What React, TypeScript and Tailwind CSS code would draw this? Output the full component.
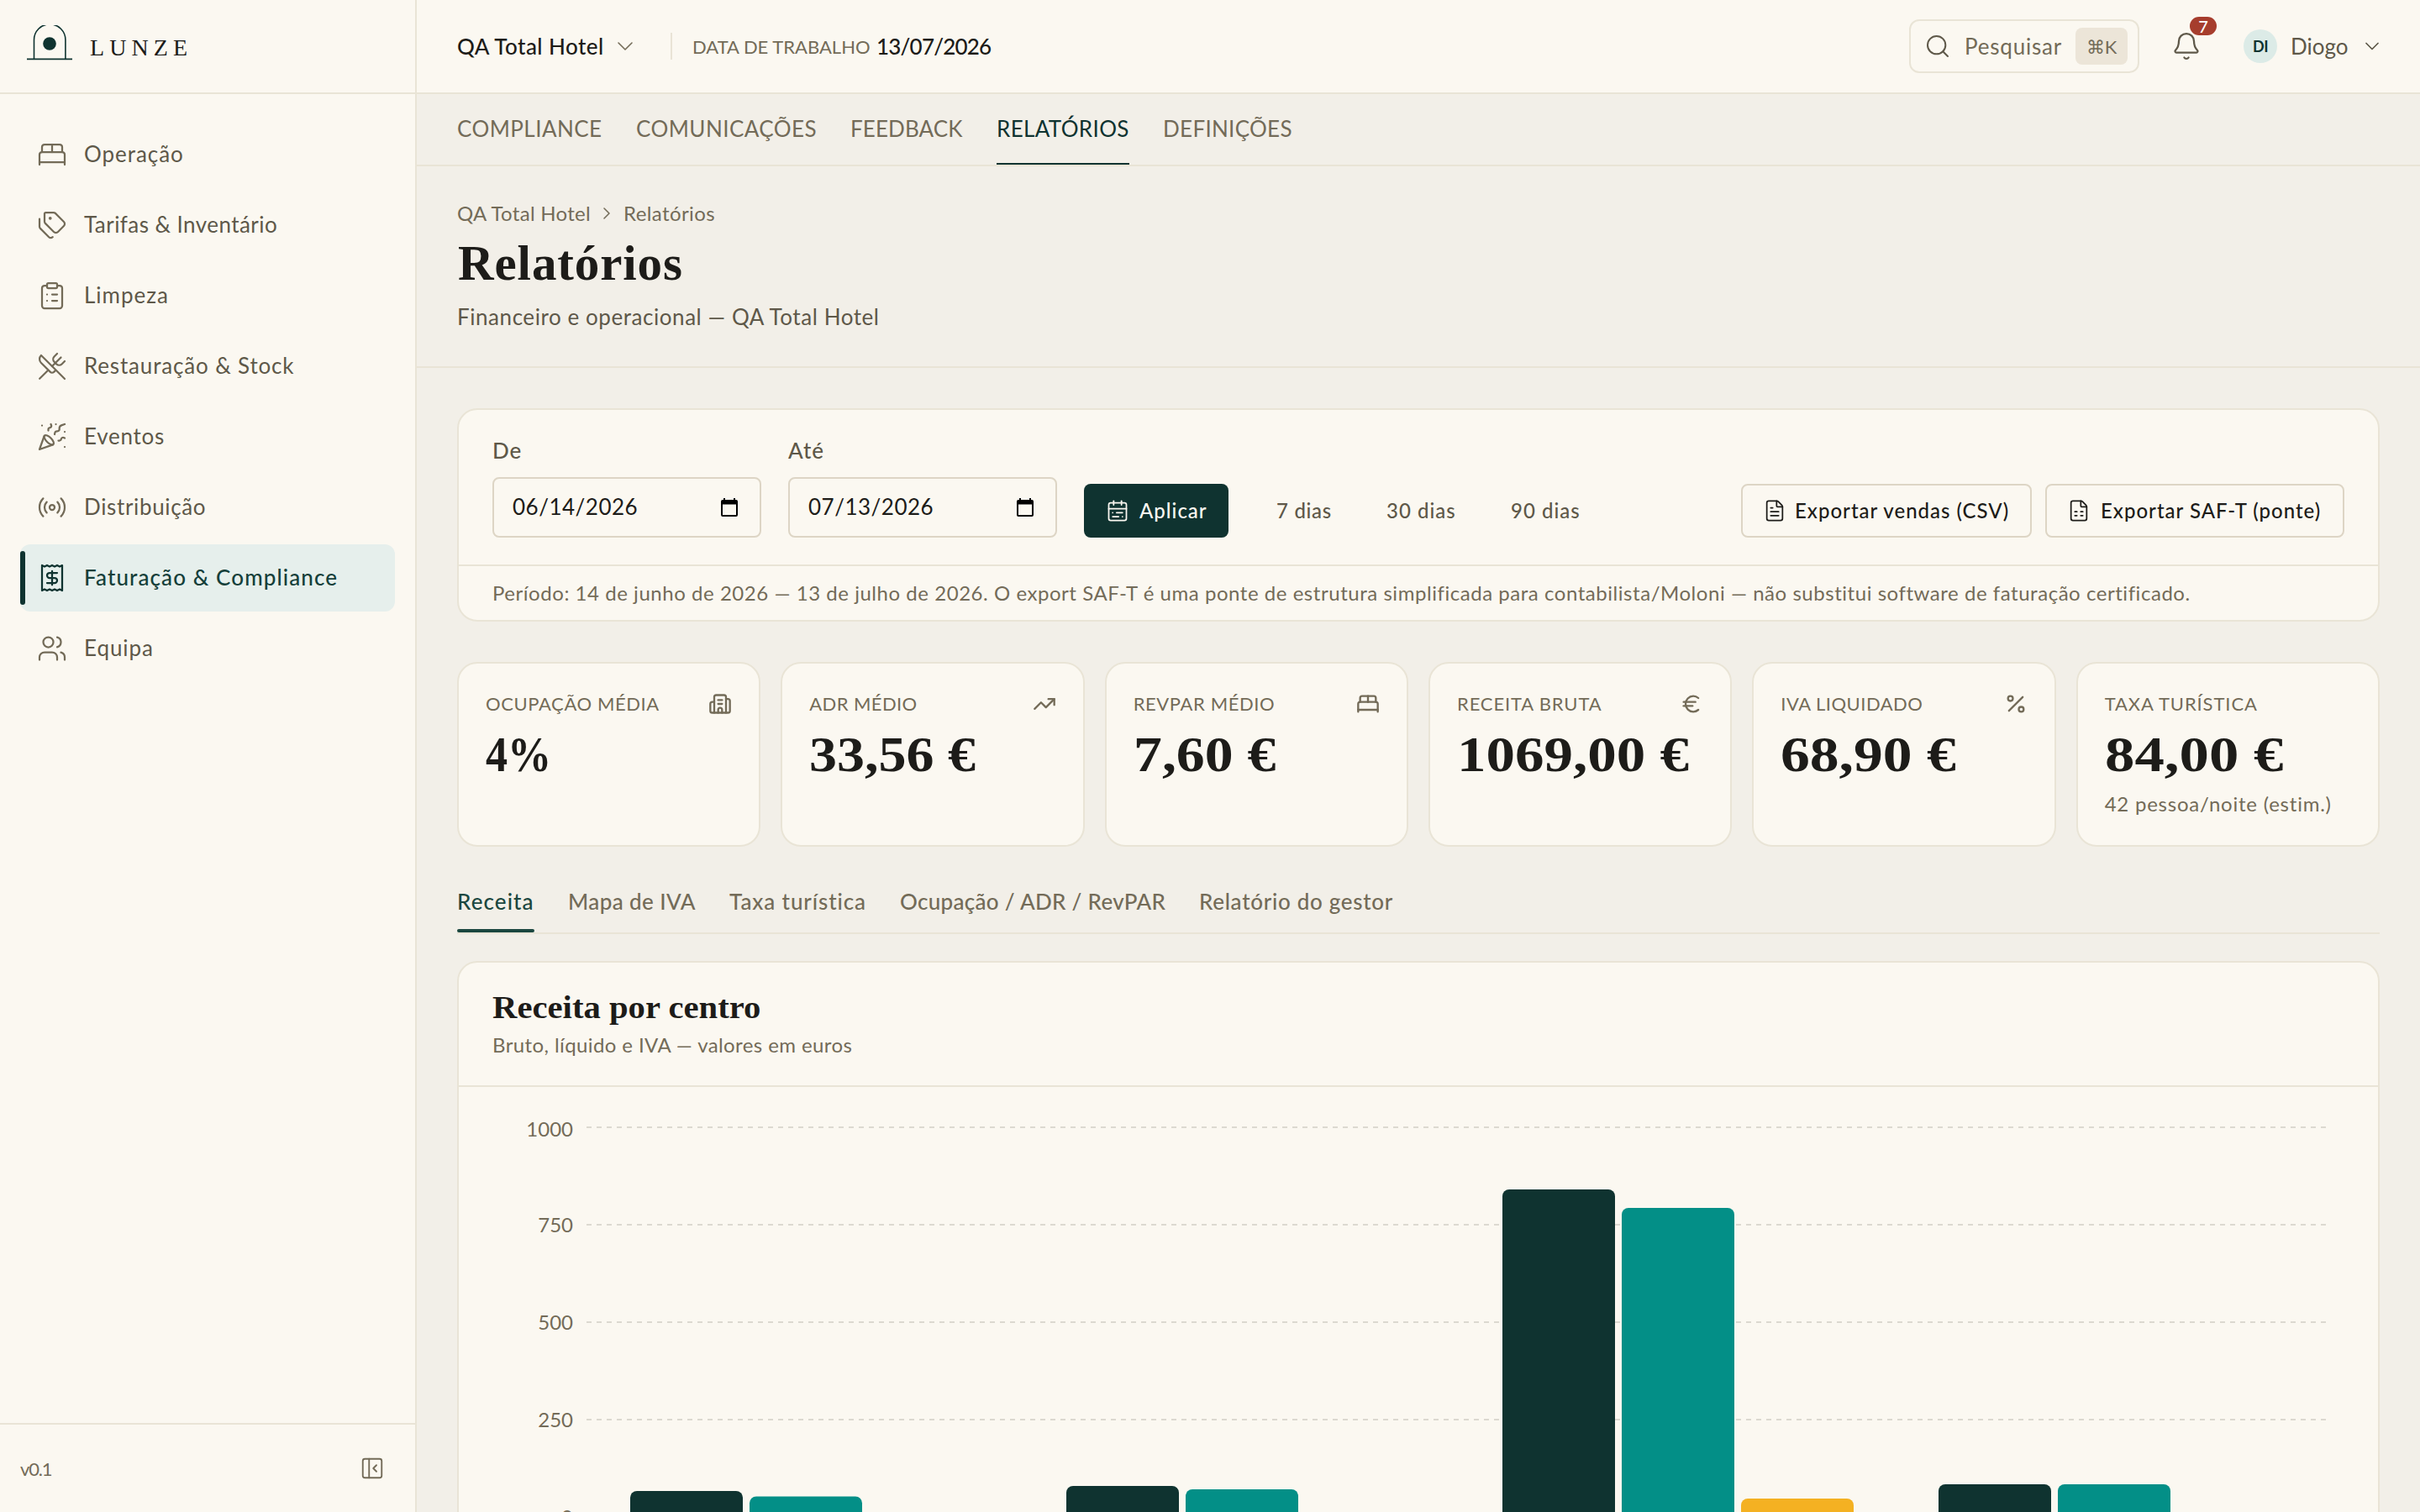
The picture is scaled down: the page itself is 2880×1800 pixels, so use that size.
import React from 'react';
import {
  BedDouble, Bell, Building2, CalendarRange, ChevronDown, ChevronRight, ClipboardList, Euro, FileSpreadsheet,
  FileText, PanelLeftClose, PartyPopper, Percent, Radio, Search, Tags, TrendingUp, Users, UtensilsCrossed,
} from 'lucide-react';
import type {LucideIcon} from 'lucide-react';

interface NavItem {
  label: string;
  icon: LucideIcon | React.FC<{className?: string; strokeWidth?: number}>;
  tracking: string;
  active?: boolean;
}

const ReceiptDollar: React.FC<{className?: string; strokeWidth?: number}> = ({className, strokeWidth}) => (
  <svg viewBox="0 0 24 24" fill="none" stroke="currentColor" strokeWidth={strokeWidth} strokeLinecap="round"
       strokeLinejoin="round" className={className}>
    <path d="M4 2v20l2-1 2 1 2-1 2 1 2-1 2 1 2-1 2 1V2l-2 1-2-1-2 1-2-1-2 1-2-1-2 1Z"/>
    <path d="M16 8h-6a2 2 0 1 0 0 4h4a2 2 0 1 1 0 4H8"/>
    <path d="M12 17.5v-11"/>
  </svg>
);

const navItems: NavItem[] = [
  {label: 'Operação', icon: BedDouble, tracking: 'tracking-[0.95px]'},
  {label: 'Tarifas & Inventário', icon: Tags, tracking: 'tracking-[0.45px]'},
  {label: 'Limpeza', icon: ClipboardList, tracking: 'tracking-[1px]'},
  {label: 'Restauração & Stock', icon: UtensilsCrossed, tracking: 'tracking-[0.84px]'},
  {label: 'Eventos', icon: PartyPopper, tracking: 'tracking-[0.75px]'},
  {label: 'Distribuição', icon: Radio, tracking: 'tracking-[0.65px]'},
  {label: 'Faturação & Compliance', icon: ReceiptDollar, tracking: 'tracking-[1.1px]', active: true},
  {label: 'Equipa', icon: Users, tracking: 'tracking-[0.95px]'},
];

const sectionTabs = [
  {label: 'COMPLIANCE', style: 'w-[173px] tracking-[0.45px]'},
  {label: 'COMUNICAÇÕES', style: 'w-[215px] tracking-[0.45px]'},
  {label: 'FEEDBACK', style: 'w-[134px] tracking-[0.1px]'},
  {label: 'RELATÓRIOS', style: 'w-[158px] tracking-[0.35px]', active: true},
  {label: 'DEFINIÇÕES', style: 'w-[154px] tracking-[0.3px]'},
];

const reportTabs = [
  {label: 'Receita', style: 'w-[92px] tracking-[1.1px]', active: true},
  {label: 'Mapa de IVA', style: 'w-[152px] tracking-[0.4px]'},
  {label: 'Taxa turística', style: 'w-[163px] tracking-[0.9px]'},
  {label: 'Ocupação / ADR / RevPAR', style: 'w-[316px] tracking-[0.3px]'},
  {label: 'Relatório do gestor', style: 'w-[231px] tracking-[0.7px]'},
];

const kpis = [
  {label: 'OCUPAÇÃO MÉDIA', value: '4%', icon: Building2, tracking: 'tracking-[0.6px]', stretch: 'scale-x-[0.87]'},
  {label: 'ADR MÉDIO', value: '33,56 €', icon: TrendingUp, tracking: 'tracking-[0.4px]', stretch: 'scale-x-[1.1]'},
  {label: 'REVPAR MÉDIO', value: '7,60 €', icon: BedDouble, tracking: 'tracking-[0.6px]', stretch: 'scale-x-[1.13]'},
  {label: 'RECEITA BRUTA', value: '1069,00 €', icon: Euro, tracking: 'tracking-[0.85px]', stretch: 'scale-x-[1.15]'},
  {label: 'IVA LIQUIDADO', value: '68,90 €', icon: Percent, tracking: 'tracking-[0.5px]', stretch: 'scale-x-[1.16]'},
  {label: 'TAXA TURÍSTICA', value: '84,00 €', hint: '42 pessoa/noite (estim.)', tracking: 'tracking-[0.9px]', stretch: 'scale-x-[1.18]'},
];

const bars = [
  {x: 750, top: 1775, fill: '#0f3330'},
  {x: 892, top: 1781.5, fill: '#038f87'},
  {x: 1269, top: 1769, fill: '#0f3330'},
  {x: 1411, top: 1773, fill: '#038f87'},
  {x: 1788, top: 1416, fill: '#0f3330'},
  {x: 1930, top: 1438, fill: '#038f87'},
  {x: 2072, top: 1784, fill: '#f4b122'},
  {x: 2307, top: 1767, fill: '#0f3330'},
  {x: 2449, top: 1767, fill: '#038f87'},
];

const Logo: React.FC = () => (
  <svg viewBox="0 0 54 42" className="h-[42px] w-[54px] shrink-0 overflow-hidden" fill="none" stroke="#0f3330" strokeWidth="1.6">
    <path d="M8.5 40V17.500a18.700 18.700 0 0 1 37.400 0V40"/>
    <path d="M0 40.400h54"/>
    <circle cx="27" cy="22" r="7.800" fill="#0f3330" stroke="none"/>
  </svg>
);

const Sidebar: React.FC = () => (
  <aside className="flex w-[496px] shrink-0 flex-col border-r-2 border-[#e9e4d6] bg-[#fbf8f1]">
    <div className="flex h-[112px] shrink-0 items-start gap-[21px] border-b-2 border-[#e9e4d6] pt-[30px] pl-8">
      <Logo/>
      <span className="mt-[11px] font-['Liberation_Serif'] text-[28px] leading-8 tracking-[6.1px] text-[#1d1c19]">LUNZE</span>
    </div>
    <nav className="flex grow flex-col gap-1 px-6 pt-8">
      {navItems.map(({label, icon: Icon, tracking, active}) => (
        <a
          key={label}
          className={`relative flex h-20 items-center gap-5 rounded-xl px-5 text-[26px] ${tracking} ${
            active ? 'bg-[#e6efec] font-medium text-[#153f3a]' : 'text-[#5e5849]'
          }`}
        >
          {active && <span className="absolute top-2 left-0 h-16 w-1.5 rounded-full bg-[#0f3330]"/>}
          <Icon className={`size-9 shrink-0 ${active ? 'text-[#0f3330]' : 'text-[#736b58]'}`} strokeWidth={1.5}/>
          <span className="pb-0.5">{label}</span>
        </a>
      ))}
    </nav>
    <div className="flex h-[106px] shrink-0 items-center justify-between border-t-2 border-[#e9e4d6] pr-9 pl-6 text-[#736b58]">
      <span className="text-[22px] tracking-[-1.2px]">v0.1</span>
      <PanelLeftClose className="size-[30px]" strokeWidth={1.5}/>
    </div>
  </aside>
);

const TopBar: React.FC = () => (
  <header className="flex h-[112px] shrink-0 items-center border-b-2 border-[#e9e4d6] bg-[#fbf8f1] pl-12 text-[26px] text-[#5e5849]">
    <span className="w-[184px] font-medium tracking-[0.45px] whitespace-nowrap text-[#1d1c19]">QA Total Hotel</span>
    <ChevronDown className="size-8 text-[#736b58]" strokeWidth={1.2}/>
    <span className="ml-[38px] h-8 w-0.5 bg-[#e9e4d6]"/>
    <span className="ml-6 w-[219px] text-[22px] whitespace-nowrap text-[#736b58]">DATA DE TRABALHO</span>
    <span className="font-medium tracking-[-0.8px] text-[#1d1c19]">13/07/2026</span>

    <div className="ml-auto flex h-16 w-[274px] items-center rounded-xl border-2 border-[#e9e4d6] pr-3 pl-4">
      <Search className="size-8" strokeWidth={1.5}/>
      <span className="ml-4 tracking-[0.8px] text-[#736b58]">Pesquisar</span>
      <span className="ml-auto flex h-11 w-[62px] items-center justify-center rounded-lg bg-[#ece5d8] text-[22px] text-[#736b58]">⌘K</span>
    </div>
    <div className="relative ml-[38px]">
      <Bell className="size-9" strokeWidth={1.5}/>
      <span className="absolute -top-[17px] left-[22px] flex h-[22px] w-8 items-center justify-center rounded-full bg-[#a63d2d] text-[20px] font-medium text-white">7</span>
    </div>
    <span className="ml-[50px] flex size-10 items-center justify-center rounded-full bg-[#dcebe7] text-[18px] font-bold tracking-[-0.5px] text-[#0f3330]">DI</span>
    <span className="ml-4 w-[67px]">Diogo</span>
    <ChevronDown className="mr-[43px] ml-4 size-7" strokeWidth={1.5}/>
  </header>
);

const DateField: React.FC<{label: string; value: string}> = ({label, value}) => (
  <div className="flex w-80 flex-col">
    <span className="text-[26px] leading-9 font-medium text-[#5e5849]">{label}</span>
    <div className="mt-3.5 flex h-[72px] items-center justify-between rounded-lg border-2 border-[#ddd5c5] pr-6 pl-[22px] text-[26px] text-[#1d1c19]">
      <span className="pb-0.5 font-normal tracking-[0.5px]">{value}</span>
      <svg viewBox="0 0 24 24" className="size-6 text-black" fill="currentColor">
        <path d="M5 1h2v2h10V1h2v2h1a2 2 0 0 1 2 2v16a2 2 0 0 1-2 2H4a2 2 0 0 1-2-2V5a2 2 0 0 1 2-2h1zM4 8.500v12.500h16V8.500z"/>
      </svg>
    </div>
  </div>
);

const FilterCard: React.FC = () => (
  <section className="flex h-[254px] flex-col rounded-3xl border-2 border-[#e9e4d6] bg-[#fbf8f1]">
    <div className="flex h-[184px] items-end gap-8 px-10 pb-8 text-[24px] font-medium tracking-[1px] text-[#5e5849]">
      <DateField label="De" value="06/14/2026"/>
      <DateField label="Até" value="07/13/2026"/>
      <div className="flex h-16 w-[172px] items-center gap-3 rounded-lg bg-[#0f3330] pl-[26px] text-[#fbf8f1]">
        <CalendarRange className="size-7" strokeWidth={1.5}/>
        Aplicar
      </div>
      <div className="flex h-16 items-center text-[#5e5849]">
        <span className="w-[131px] pl-[25px] tracking-[0.7px]">7 dias</span>
        <span className="w-[148px] pl-[25px]">30 dias</span>
        <span className="pl-[25px]">90 dias</span>
      </div>
      <div className="ml-auto flex gap-4 text-[#1d1c19]">
        <div className="flex h-16 w-[346px] items-center gap-2.5 rounded-lg border-2 border-[#ddd5c5] pl-6 whitespace-nowrap">
          <FileText className="size-7" strokeWidth={1.5}/>
          Exportar vendas (CSV)
        </div>
        <div className="flex h-16 w-[356px] items-center gap-3 rounded-lg border-2 border-[#ddd5c5] pl-6 whitespace-nowrap">
          <FileSpreadsheet className="size-7" strokeWidth={1.5}/>
          Exportar SAF-T (ponte)
        </div>
      </div>
    </div>
    <p className="flex grow items-center border-t-2 border-[#e9e4d6] px-10 text-[24px] tracking-[0.54px] whitespace-nowrap text-[#736b58]">
      Período: 14 de junho de 2026 — 13 de julho de 2026. O export SAF-T é uma ponte de estrutura simplificada para
      contabilista/Moloni — não substitui software de faturação certificado.
    </p>
  </section>
);

const KpiGrid: React.FC = () => (
  <section className="mt-12 grid grid-cols-6 gap-6">
    {kpis.map(({label, value, icon: Icon, hint, tracking, stretch}) => (
      <div key={label} className="h-[220px] rounded-3xl border-2 border-[#e9e4d6] bg-[#fbf8f1] px-8 pt-8">
        <div className="flex h-8 items-center justify-between text-[22px] text-[#736b58]">
          <span className={`pb-px ${tracking}`}>{label}</span>
          {Icon && <Icon className="size-7" strokeWidth={2}/>}
        </div>
        <div className={`mt-2 w-fit origin-left font-['Liberation_Serif'] text-[60px] leading-[72px] font-bold whitespace-nowrap text-[#1d1c19] ${stretch}`}>
          {value}
        </div>
        {hint && <div className="mt-[7px] text-[24px] leading-8 tracking-[0.77px] whitespace-nowrap text-[#736b58]">{hint}</div>}
      </div>
    ))}
  </section>
);

// Plot area starts right under the card header (y = 1294) and runs past the fold.
const RevenueChart: React.FC = () => (
  <svg viewBox="546 1294 2284 506" className="block h-[506px] w-[2284px]">
    {[1000, 750, 500, 250, 0].map((tick, i) => (
      <g key={tick}>
        <line x1="698" x2="2768" y1={1342 + i * 116} y2={1342 + i * 116} stroke="#dcd9d0" strokeWidth="2" strokeDasharray="6 6"/>
        <text x="682" y={(i === 0 ? 1353 : 1351) + i * 116} textAnchor="end" fontSize="24" fill="#736b58">{tick}</text>
      </g>
    ))}
    {bars.map((bar) => (
      <rect key={bar.x} x={bar.x} y={bar.top} width="134" height={1806 - bar.top + 20} rx="8" fill={bar.fill}/>
    ))}
  </svg>
);

const App: React.FC = () => (
  <div className="flex h-[1800px] w-[2880px] overflow-hidden bg-[#f2efe8] font-['Lato',sans-serif]">
    <Sidebar/>
    <div className="flex grow flex-col overflow-hidden">
      <TopBar/>
      <div className="flex h-[86px] shrink-0 gap-10 border-b-2 border-[#e9e4d6] px-12 text-[26px] text-[#736b58]">
        {sectionTabs.map(({label, style, active}) => (
          <span
            key={label}
            className={`flex h-[84px] items-center border-b-2 whitespace-nowrap ${style} ${
              active ? 'border-[#0f3330] text-[#0f3330]' : 'border-transparent'
            }`}
          >
            {label}
          </span>
        ))}
      </div>
      <div className="h-[240px] shrink-0 border-b-2 border-[#e9e4d6] px-12 pt-[38px]">
        <div className="flex h-9 items-center text-[24px] tracking-[0.3px] text-[#736b58]">
          <span className="w-[166px]">QA Total Hotel</span>
          <ChevronRight className="mr-2 size-6" strokeWidth={1.5}/>
          <span className="tracking-[0.4px]">Relatórios</span>
        </div>
        <h1 className="mt-[5px] pl-px font-['Liberation_Serif'] text-[59px] leading-[72px] font-bold tracking-[0.9px] text-[#1d1c19]">Relatórios</h1>
        <p className="mt-[10px] text-[26px] leading-9 tracking-[0.56px] text-[#5e5849]">Financeiro e operacional — QA Total Hotel</p>
      </div>
      <main className="px-12 pt-12">
        <FilterCard/>
        <KpiGrid/>
        <div className="mt-8 flex h-[72px] gap-10 border-b-2 border-[#e9e4d6] text-[26px] font-medium text-[#736b58]">
          {reportTabs.map(({label, style, active}) => (
            <span key={label} className={`flex flex-col justify-end whitespace-nowrap ${style} ${active ? 'text-[#1b4740]' : ''}`}>
              <span className="pb-[13px]">{label}</span>
              <span className={`h-1 rounded-full ${active ? 'bg-[#1b4740]' : ''}`}/>
            </span>
          ))}
        </div>
        <section className="mt-8 h-[800px] overflow-hidden rounded-3xl border-2 border-[#e9e4d6] bg-[#fbf8f1]">
          <div className="h-[148px] border-b-2 border-[#e9e4d6] px-10 pt-8">
            <h2 className="w-fit origin-left scale-x-[1.1] font-['Liberation_Serif'] text-[37px] leading-[44px] font-bold text-[#1d1c19]">Receita por centro</h2>
            <p className="mt-1 text-[24px] leading-9 tracking-[0.4px] text-[#736b58]">Bruto, líquido e IVA — valores em euros</p>
          </div>
          <RevenueChart/>
        </section>
      </main>
    </div>
  </div>
);

export default App;
